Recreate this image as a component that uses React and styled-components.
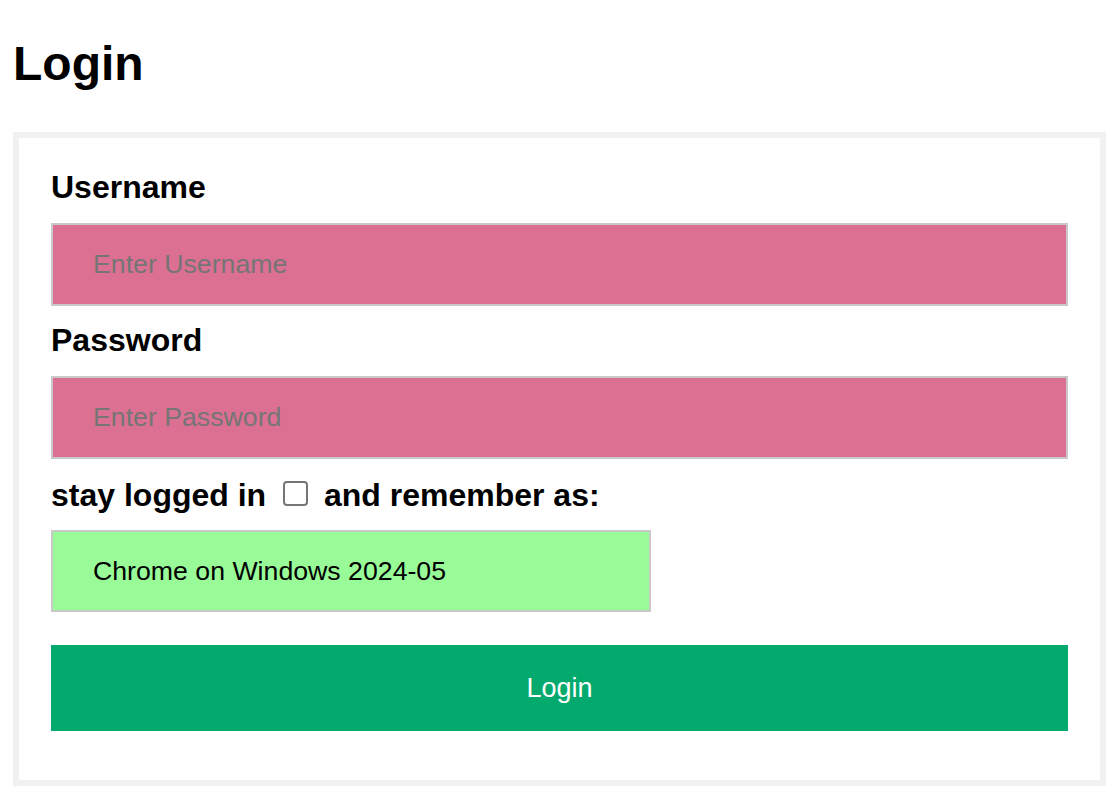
import React from "react";
import styled, { createGlobalStyle } from "styled-components";

const GlobalStyle = createGlobalStyle`
    body {
        margin: 0;
        padding: 0 12px;
        background: #fff;
        font-family: "Liberation Sans", Arial, sans-serif;
        color: #000;
    }
`;

const Title = styled.h1`
    font-size: 48px;
    line-height: 54px;
    font-weight: 700;
    margin: 37px 0 41px 1px;
`;

const FormBox = styled.form`
    margin: 0 1px;
    border: 6px solid #f1f1f1;
    padding: 32px 32px 49px;
    display: flex;
    flex-direction: column;
    align-items: flex-start;
`;

const Label = styled.label`
    display: block;
    font-size: 32px;
    line-height: 34px;
    font-weight: 700;
    margin-top: ${(p) => p.$gap || 0}px;
`;

const TextInput = styled.input`
    box-sizing: border-box;
    width: ${(p) => p.$width || "100%"};
    height: ${(p) => p.$height || 83}px;
    margin-top: ${(p) => p.$gap || 0}px;
    padding: 0 40px;
    border: 2px solid #c9c9c9;
    background: ${(p) => p.$bg};
    font-family: "Liberation Sans", Arial, sans-serif;
    font-size: 26.7px;
    color: #000;
    outline: none;

    &::placeholder {
        color: #757575;
    }
`;

const Check = styled.input`
    appearance: none;
    box-sizing: border-box;
    width: 25px;
    height: 25px;
    margin: 0 7px 0 8px;
    border: 2px solid #767676;
    border-radius: 4px;
    background: #fff;
    vertical-align: baseline;
`;

const SubmitButton = styled.button`
    box-sizing: border-box;
    width: 100%;
    height: 86px;
    margin-top: 33px;
    border: none;
    background: #04aa6d;
    color: #fff;
    font-family: "Liberation Sans", Arial, sans-serif;
    font-size: 27px;
    cursor: pointer;
`;

function App() {
    return (
        <>
            <GlobalStyle />
            <Title>Login</Title>
            <FormBox onSubmit={(e) => e.preventDefault()}>
                <Label htmlFor="uname">Username</Label>
                <TextInput id="uname" $gap={19} $bg="#db7093" placeholder="Enter Username" />
                <Label htmlFor="psw" $gap={17}>Password</Label>
                <TextInput id="psw" type="password" $gap={19} $bg="#db7093" placeholder="Enter Password" />
                <Label $gap={19}>
                    stay logged in <Check type="checkbox" /> and remember as:
                </Label>
                <TextInput $gap={18} $bg="#98fb98" $width="600px" $height={82} defaultValue="Chrome on Windows 2024-05" />
                <SubmitButton type="submit">Login</SubmitButton>
            </FormBox>
        </>
    );
}

export default App;
